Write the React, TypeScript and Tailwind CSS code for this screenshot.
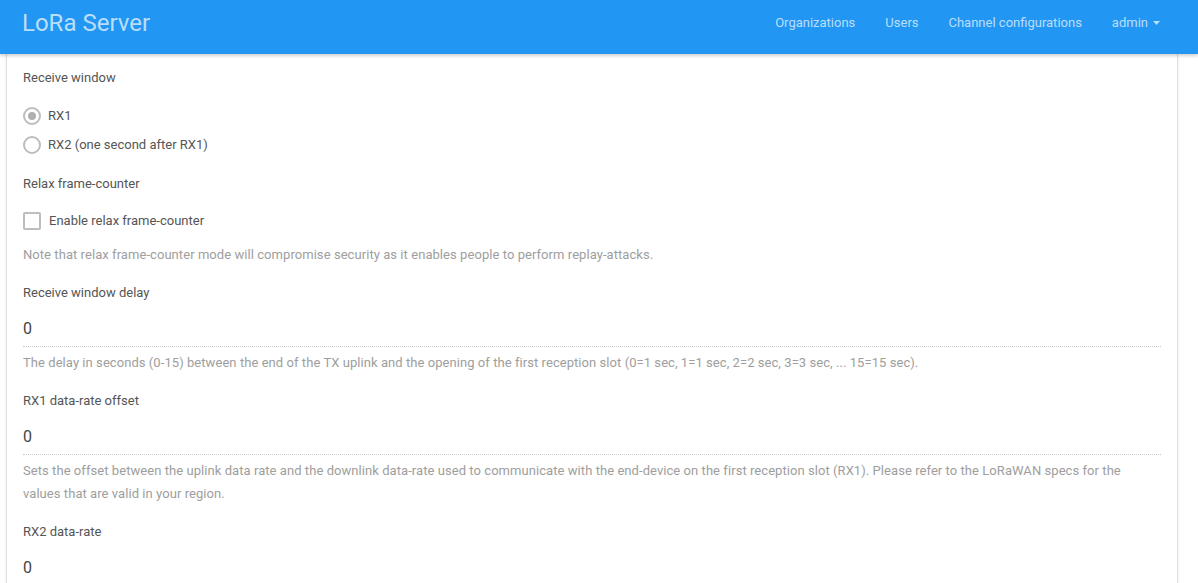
import React from "react";

function Radio({ checked, label }: { checked?: boolean; label: string }) {
  return (
    <label className="flex h-[29px] items-center gap-[7px]">
      <span className="flex h-[18px] w-[18px] items-center justify-center rounded-full border-2 border-[#bdbdbd]">
        {checked && <span className="h-[8px] w-[8px] rounded-full bg-[#b0b0b0]" />}
      </span>
      <span className="text-[13px] text-[#555]">{label}</span>
    </label>
  );
}

function Field({ label, value, help }: { label: string; value: string; help: React.ReactNode }) {
  return (
    <div className="mb-[17px]">
      <div className="h-5 text-[13px] leading-5 text-[#555]">{label}</div>
      <div className="mt-2 flex h-9 items-center border-b border-dotted border-[#c8c8c8] text-[16px] text-[#444]">
        {value}
      </div>
      <p className="mt-[4px] pr-[8px] text-[13px] leading-[23px] tracking-[0.06px] text-[#9e9e9e]">{help}</p>
    </div>
  );
}

export default function App() {
  return (
    <div className="min-h-screen bg-white font-['Roboto',sans-serif]">
      <header className="relative z-10 flex h-[54px] items-center justify-between bg-[#2196f3] pb-2 pl-[22px] pr-[23px] shadow-[0_2px_3px_rgba(0,0,0,0.18)]">
        <span className="text-[24px] text-white/70">LoRa Server</span>
        <nav className="flex items-center text-[13px] text-white/70">
          <a className="px-[15px]">Organizations</a>
          <a className="px-[15px]">Users</a>
          <a className="px-[15px]">Channel configurations</a>
          <a className="flex items-center gap-[5px] px-[15px]">
            admin
            <svg width="7" height="4" viewBox="0 0 7 4" fill="currentColor">
              <path d="M0 0h7L3.5 4z" />
            </svg>
          </a>
        </nav>
      </header>

      <div className="ml-[6px] w-[1172px] border-x border-[#dedede] px-[16px] pt-[14px] shadow-[0_1px_3px_rgba(0,0,0,0.08)]">
        <div className="h-5 text-[13px] leading-5 text-[#555]">Receive window</div>
        <div className="mt-[13px]">
          <Radio checked label="RX1" />
          <Radio label="RX2 (one second after RX1)" />
        </div>

        <div className="mt-[15px] h-5 text-[13px] leading-5 text-[#555]">Relax frame-counter</div>
        <label className="mt-[12px] flex h-[29px] items-center gap-[8px]">
          <span className="h-[18px] w-[18px] rounded-[2px] border-2 border-[#bdbdbd]" />
          <span className="text-[13px] text-[#555]">Enable relax frame-counter</span>
        </label>
        <p className="mt-[10px] h-5 text-[13px] leading-5 tracking-[0.06px] text-[#9e9e9e]">
          Note that relax frame-counter mode will compromise security as it enables people to perform replay-attacks.
        </p>

        <div className="mt-[18px]">
          <Field
            label="Receive window delay"
            value="0"
            help="The delay in seconds (0-15) between the end of the TX uplink and the opening of the first reception slot (0=1 sec, 1=1 sec, 2=2 sec, 3=3 sec, ... 15=15 sec)."
          />
          <Field
            label="RX1 data-rate offset"
            value="0"
            help="Sets the offset between the uplink data rate and the downlink data-rate used to communicate with the end-device on the first reception slot (RX1). Please refer to the LoRaWAN specs for the values that are valid in your region."
          />
          <Field label="RX2 data-rate" value="0" help="" />
        </div>
      </div>
    </div>
  );
}
